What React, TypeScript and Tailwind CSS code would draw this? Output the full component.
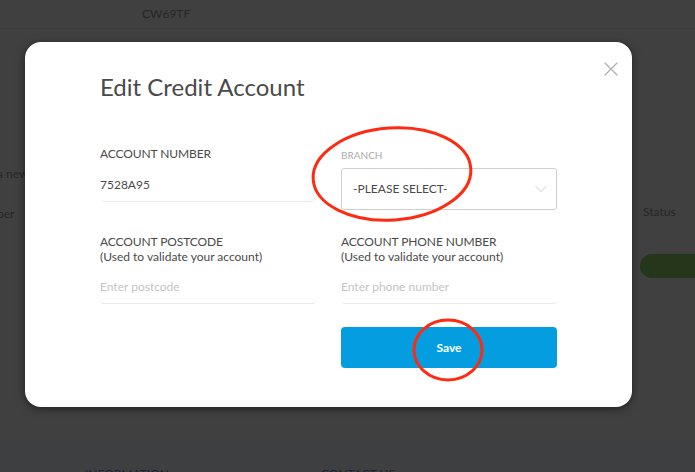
import { ChevronDown, X } from "lucide-react";

function Field({ label, note, value, placeholder }: { label: string; note?: string; value?: string; placeholder?: string }) {
  return (
    <div>
      <div className="text-[12px] leading-[16px] tracking-[-0.1px] text-[#4a4a4a]">{label}</div>
      {note && <div className="text-[12px] leading-[14px] text-[#4a4a4a]">{note}</div>}
      <div className="mt-[6px] flex h-[34px] items-center rounded-[4px] border-b border-[#ececec] text-[12px]">
        {value ? <span className="text-[#4a4a4a]">{value}</span> : <span className="text-[#c4c4c4]">{placeholder}</span>}
      </div>
    </div>
  );
}

export default function App() {
  return (
    <div className="relative h-[472px] w-[695px] overflow-hidden bg-[#404040] font-['Lato',sans-serif]">
      {/* page behind the dimmed overlay */}
      <header className="flex h-[29px] items-center border-b border-[#3b3b3b] pl-[142px] text-[12px] text-[#262626]">
        CW69TF
      </header>
      <div className="flex justify-between pt-[136px] text-[12px] text-[#262626]">
        <div className="-ml-[3px] flex flex-col gap-[22px]">
          <span>a new</span>
          <span>ber</span>
        </div>
        <div className="flex w-[55px] flex-col pt-[38px]">
          <span className="pl-[3px]">Status</span>
          <div className="mt-[33px] h-[24px] rounded-l-full bg-[#26361b]" />
        </div>
      </div>
      <footer className="absolute inset-x-0 top-[440px] h-[32px] bg-[#3e3f41] pt-[25px] text-[12px] text-[#1b2230]">
        <div className="flex pl-[85px]">
          <span className="w-[236px]">INFORMATION</span>
          <span>CONTACT US</span>
        </div>
      </footer>

      {/* modal */}
      <div className="absolute left-[25px] top-[42px] h-[365px] w-[607px] rounded-[16px] bg-white px-[75px] pt-[31px] shadow-[0_2px_8px_rgba(0,0,0,0.5)]">
        <button className="absolute right-[9px] top-[15px] text-[#b0b0b0]">
          <X size={24} strokeWidth={1.3} />
        </button>
        <h2 className="text-[24px] leading-[28px] text-[#4a4a4a]">Edit Credit Account</h2>

        <div className="mt-[45px] grid grid-cols-[216px_216px] gap-x-[25px] gap-y-[24px]">
          <Field label="ACCOUNT NUMBER" value="7528A95" />
          <div className="pt-[2px]">
            <div className="text-[10px] leading-[14px] text-[#ababab]">BRANCH</div>
            <div className="mt-[6px] flex h-[42px] items-center justify-between rounded-[3px] border border-[#cfcfcf] pl-[11px] pr-[5px] text-[12px] text-[#4a4a4a]">
              <span>-PLEASE SELECT-</span>
              <ChevronDown size={20} strokeWidth={1.2} className="text-[#c8c8c8]" />
            </div>
          </div>

          <Field label="ACCOUNT POSTCODE" note="(Used to validate your account)" placeholder="Enter postcode" />
          <Field label="ACCOUNT PHONE NUMBER" note="(Used to validate your account)" placeholder="Enter phone number" />

          <button className="col-start-2 -mt-[1px] h-[41px] rounded-[4px] bg-[#049ee0] text-[12px] font-bold text-white">
            Save
          </button>
        </div>
      </div>

      {/* red hand-drawn annotations */}
      <svg className="pointer-events-none absolute inset-0" width="695" height="472" viewBox="0 0 695 472" fill="none">
        <ellipse cx="392" cy="174" rx="79" ry="46" transform="rotate(-4 392 174)" stroke="#ff2a12" strokeWidth="3" />
        <ellipse cx="448" cy="350" rx="34" ry="30" stroke="#ff2a12" strokeWidth="3" />
      </svg>
    </div>
  );
}
